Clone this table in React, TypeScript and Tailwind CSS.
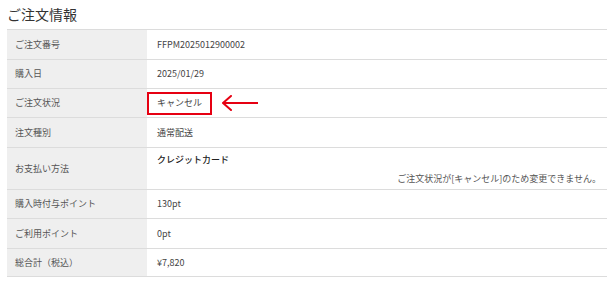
import React from 'react';

type Row = {
  label: string;
  value: string;
  h: string;
};

const rows: Row[] = [
  { label: 'ご注文番号', value: 'FFPM2025012900002', h: 'h-[30px]' },
  { label: '購入日', value: '2025/01/29', h: 'h-[29px]' },
  { label: 'ご注文状況', value: 'キャンセル', h: 'h-[29px]' },
  { label: '注文種別', value: '通常配送', h: 'h-[30px]' },
  { label: 'お支払い方法', value: 'クレジットカード', h: 'h-[42px]' },
  { label: '購入時付与ポイント', value: '130pt', h: 'h-[29px]' },
  { label: 'ご利用ポイント', value: '0pt', h: 'h-[30px]' },
  { label: '総合計（税込）', value: '¥7,820', h: 'h-[28px]' },
];

const font = { fontFamily: '"Noto Sans CJK JP", "Noto Sans", sans-serif' };

const App = () => {
  return (
    <div className="w-[614px] h-[285px] bg-white text-[#333] overflow-hidden" style={font}>
      <div className="pl-[7px] pr-[7px]">
        <h2 className="h-[29px] flex items-center text-[14px] leading-none pb-[2px]">ご注文情報</h2>

        <div className="w-[600px] border-t border-[#dcdcdc]">
          {rows.map((row) => (
            <div key={row.label} className={`flex border-b border-[#dcdcdc] ${row.h}`}>
              <div className="w-[140px] shrink-0 bg-[#efefef] flex items-center pl-[8px] text-[9px] text-[#555]">
                {row.label}
              </div>

              {row.label === 'お支払い方法' ? (
                <div className="flex-1 flex flex-col pl-[10px] pr-[6px] pt-[5px] text-[9px]">
                  <span className="font-medium text-[#222]">{row.value}</span>
                  <span className="self-end mt-[5px] text-[#555]">
                    ご注文状況が[キャンセル]のため変更できません。
                  </span>
                </div>
              ) : row.label === 'ご注文状況' ? (
                <div className="flex-1 flex items-center">
                  {/* status highlighted with a red frame and an arrow */}
                  <span className="w-[65px] h-[23px] border-2 border-[#e60012] flex items-center pl-[8px] text-[9px] text-[#444]">
                    {row.value}
                  </span>
                  <svg width="38" height="16" viewBox="0 0 38 16" className="ml-[9px]">
                    <path d="M2 8 H37" stroke="#e60012" strokeWidth="2" fill="none" />
                    <path d="M10 1 L2 8 L10 15" stroke="#e60012" strokeWidth="2" fill="none" strokeLinecap="round" strokeLinejoin="round" />
                  </svg>
                </div>
              ) : (
                <div className="flex-1 flex items-center pl-[10px] text-[9px] text-[#444]">
                  {row.value}
                </div>
              )}
            </div>
          ))}
        </div>
      </div>
    </div>
  );
};

export default App;
